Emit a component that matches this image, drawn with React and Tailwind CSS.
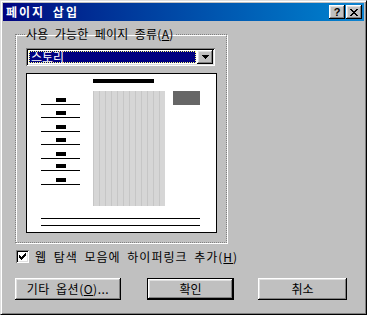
const raised =
  'bg-[#c0c0c0] shadow-[inset_-1px_-1px_#000,inset_1px_1px_#fff,inset_-2px_-2px_#808080,inset_2px_2px_#dfdfdf]';
const sunken =
  'shadow-[inset_1px_1px_#808080,inset_-1px_-1px_#fff,inset_2px_2px_#000,inset_-2px_-2px_#dfdfdf]';
const ko = "font-['Noto_Sans_CJK_KR','Liberation_Sans',sans-serif]";

const listRows = ['mt-0', 'mt-[6px]', 'mt-[7px]', 'mt-[6px]', 'mt-[7px]', 'mt-[5px]', 'mt-[7px]'];

function TitleButton({ children }) {
  return (
    <div className={`${raised} w-[16px] h-[14px] flex items-center justify-center`}>
      {children}
    </div>
  );
}

function Preview() {
  return (
    <div className="w-[191px] h-[160px] mt-[7px] bg-white border border-black flex flex-col">
      <div className="ml-[66px] mt-[5px] w-[61px] h-[4px] bg-black" />
      <div className="flex mt-[8px]">
        <div className="ml-[14px] w-[39px] pt-[7px] flex flex-col">
          {listRows.map((m, i) => (
            <div key={i} className={`${m} flex flex-col items-center`}>
              <div className="w-[10px] h-[4px] bg-black" />
              <div className="mt-[2px] w-[39px] h-[1px] bg-black" />
            </div>
          ))}
        </div>
        <div className="ml-[13px] w-[72px] h-[115px] bg-[image:repeating-linear-gradient(90deg,#c6c6c6_0px,#c6c6c6_1px,#d6d6d6_1px,#d6d6d6_6px)]" />
        <div className="ml-[8px] w-[27px] h-[14px] bg-[#666666]" />
      </div>
      <div className="ml-[14px] mt-[12px] w-[159px] h-[1px] bg-black" />
      <div className="ml-[14px] mt-[6px] w-[159px] h-[1px] bg-black" />
    </div>
  );
}

export default function App() {
  return (
    <div className={`${ko} w-[367px] h-[315px] bg-[#c0c0c0] border border-t-[#dfdfdf] border-l-[#dfdfdf] border-r-black border-b-black shadow-[inset_1px_1px_#fff,inset_-1px_-1px_#808080] p-[2px] flex flex-col text-[12px] text-black leading-[14px] [word-spacing:3px]`}>
      <div className="h-[18px] bg-gradient-to-r from-[#000080] to-[#1084d0] flex items-center justify-between pl-[3px] pr-[2px]">
        <span className="text-white font-bold text-[12px] tracking-[2px]">페이지 삽입</span>
        <div className="flex gap-[1px]">
          <TitleButton>
            <span className="font-['Liberation_Sans',sans-serif] font-bold text-[11px] leading-none mt-[1px]">?</span>
          </TitleButton>
          <TitleButton>
            <svg width="8" height="7" viewBox="0 0 8 7" shapeRendering="crispEdges">
              <path d="M0 0h2v1h1v1h2v-1h1v-1h2v1h-1v1h-1v1h-1v1h1v1h1v1h1v1h-2v-1h-1v-1h-2v1h-1v1h-2v-1h1v-1h1v-1h1v-1h-1v-1h-1v-1h-1z" fill="#000" />
            </svg>
          </TitleButton>
        </div>
      </div>

      <div className="pl-[12px] flex flex-col">
        <fieldset className="mt-[6px] w-[212px] h-[216px] border border-dotted border-[#808080] shadow-[inset_1px_1px_0_#fff,1px_1px_0_#fff] pl-[10px]">
          <legend className="px-[1px] -ml-[1px] leading-[14px] tracking-[0.3px]">
            사용 가능한 페이지 종류(<span className="underline">A</span>)
          </legend>
          <div className={`${sunken} bg-white w-[189px] h-[18px] mt-[7px] flex items-center p-[3px] pr-[2px]`}>
            <div className="flex-1 h-[12px] bg-[#000080] border border-dotted border-[#ffff80] flex items-center pl-[1px]">
              <span className="text-white leading-[12px]">스토리</span>
            </div>
            <div className={`${raised} ml-[1px] w-[16px] h-[14px] flex items-center justify-center`}>
              <svg width="7" height="4" viewBox="0 0 7 4" shapeRendering="crispEdges">
                <path d="M0 0h7v1h-1v1h-1v1h-1v1h-1v-1h-1v-1h-1v-1h-1z" fill="#000" />
              </svg>
            </div>
          </div>
          <Preview />
        </fieldset>

        <div className="mt-[7px] ml-[1px] flex items-center h-[13px]">
          <div className={`${sunken} bg-white w-[13px] h-[13px] flex items-center justify-center`}>
            <svg width="7" height="7" viewBox="0 0 7 7" shapeRendering="crispEdges">
              <path d="M6 0h1v3h-1v1h-1v1h-1v1h-1v1h-1v-1h-1v-1h-1v-1h-1v-3h1v1h1v1h1v1h1v-1h1v-1h1z" fill="#000" />
            </svg>
          </div>
          <span className="ml-[6px] tracking-[1px]">
            웹 탐색 모음에 하이퍼링크 추가(<span className="underline">H</span>)
          </span>
        </div>

        <div className="mt-[15px] flex">
          <div className={`${raised} w-[106px] h-[22px] flex items-center justify-center tracking-[0.5px]`}>
            기타 옵션(<span className="underline">O</span>)...
          </div>
          <div className="ml-[26px] w-[87px] h-[22px] border border-black flex">
            <div className={`${raised} flex-1 flex items-center justify-center`}>확인</div>
          </div>
          <div className={`${raised} ml-[24px] w-[89px] h-[22px] flex items-center justify-center`}>
            취소
          </div>
        </div>
      </div>
    </div>
  );
}
